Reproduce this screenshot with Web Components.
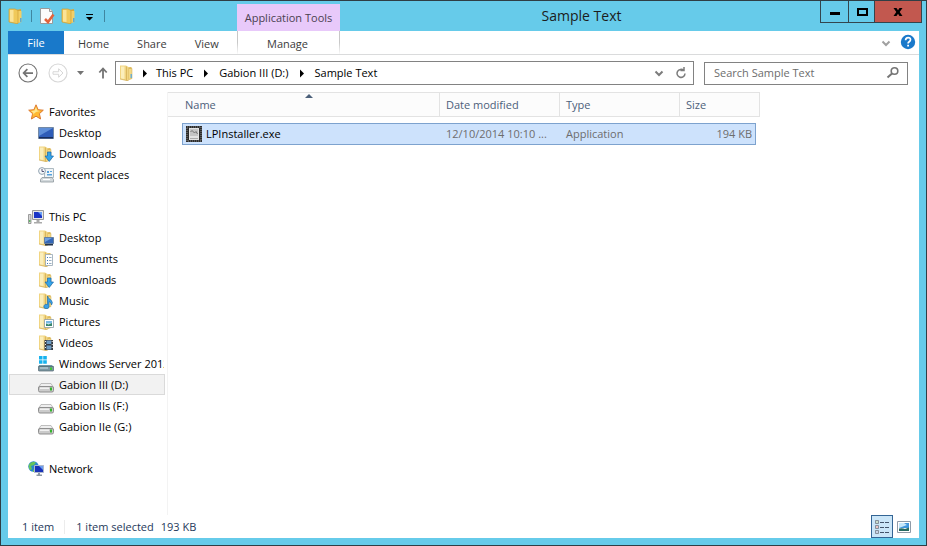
<!DOCTYPE html>
<html lang="en">
<head>
<meta charset="utf-8">
<title>Sample Text</title>
<style>
html, body { height: 100%; margin: 0; }
body { font: 11px/20px "Open Sans", "Noto Sans", sans-serif; color: #000; }
</style>
</head>
<body>
<explorer-window></explorer-window>
<script>
const FOLDER = `<path d="M7 2.500L12.500 2v12L8 15z" fill="#dfb956"/><path d="M9.500 3.500h3.500v10L9.500 14.500z" fill="#f3d987" stroke="#cfa94c" stroke-width=".5"/><path d="M1 .5h6l2.500 1.500v13.500h-2L1 14z" fill="#f1d582"/><path d="M2 1.500h3.500v12.500L2 13.500z" fill="#fbeebb"/><path d="M7.500 1.500v14M1 14l6.500 1.500h2" fill="none" stroke="#d0ab50" stroke-width=".7"/>`;
const DRIVE = `<path d="M3 6.500h10l2.500 4h-15z" fill="#efefef" stroke="#b0b0b0" stroke-width=".8"/><rect x=".5" y="9.500" width="15" height="5.500" rx="1.500" fill="#cbcbcb" stroke="#868686" stroke-width=".9"/><path d="M2 10.500h9v1.500H2z" fill="#f1f1f1"/><path d="M12 10.500h2v3h-2z" fill="#35b52e"/>`;
const ICONS = {
  folder: FOLDER + `<path d="M11.500 9h1.500v4h-1.500z" fill="#6caed0"/>`,
  gold: `<path d="M8 2l5-1v13l-5 1z" fill="#d9a93a"/><path d="M10 3h3.500v11L10 15z" fill="#f3cf66"/><path d="M1 1h6l3 1.500v13H8L1 14z" fill="#f0c95a" stroke="#cf9f33" stroke-width=".7"/><path d="M2 2h3.500v12L2 13.500z" fill="#fae397"/><path d="M12 10h1.500v4H12z" fill="#5fa9cf"/>`,
  page: `<path d="M1.500 .5h9l3 3v12h-12z" fill="#fbfbfb" stroke="#9a9a9a"/><path d="M10.500 .5v3h3" fill="#e8e8e8" stroke="#9a9a9a"/><path d="M6 11l3 3 5.500-7.500" fill="none" stroke="#e2633c" stroke-width="2.600"/>`,
  custom: `<path d="M5 6h7v1H5zM5 9h7l-3.500 3.500z" fill="#000"/>`,
  star: `<path d="M8 .8l2.100 4.900 5.200.5-3.900 3.500 1.200 5.300L8 12.200 3.400 15l1.200-5.300L.7 6.200l5.200-.5z" fill="#ffb931" stroke="#dd7a31"/><path d="M8 3l1.300 3.500 3 .5-4.300 1-3.500 3 1-2L3 7l3.500-.5z" fill="#ffe78f"/>`,
  desktop: `<path d="M.5 2.500h15v11H.5z" fill="#2f5db8" stroke="#7389a5"/><path d="M1 3h14L1 11z" fill="#5f8fd8"/><path d="M1 12h14v1.500H1z" fill="#182d5d"/>`,
  downloads: FOLDER + `<path d="M9.500 6h3.500v4h2.500L11.200 15.500 7 10h2.500z" fill="#35a4e8" stroke="#1869ad" stroke-width=".7"/>`,
  recent: `<path d="M6.500 1.500h9v9h-9z" fill="#eff4f7" stroke="#9aa9b3" stroke-width=".8"/><path d="M9 4h2v2H9zM12 4h2v1h-2zM9 7h5v1.500H9z" fill="#56a1dc"/><circle cx="4" cy="4" r="3.400" fill="#f5f8fa" stroke="#92a3b0"/><path d="M4 2v2.500h2" fill="none" stroke="#557"/><path d="M4 10.500h10l1.500 2v2.500h-13v-2.500z" fill="#d3d9dc" stroke="#8d979c" stroke-width=".8"/><path d="M5 12h7v1H5z" fill="#fff"/>`,
  pc: `<path d="M.5 5.500h2.500v9H.5z" fill="#d8d8d8" stroke="#888" stroke-width=".8"/><path d="M1.300 11h1v2h-1z" fill="#30a838"/><path d="M4.500 1.500h11v9h-11z" fill="#e7e7e7" stroke="#999"/><path d="M6 3h8v6H6z" fill="#1b35c5"/><path d="M10 3h4v4z" fill="#6aa0f5"/><path d="M8.500 11h3v2H14v1.500H6V13h2.500z" fill="#aaa"/>`,
  fdesktop: FOLDER + `<path d="M6.500 7.500h9v6h-9z" fill="#3467b8" stroke="#67809f"/><path d="M7 8h7l-7 4z" fill="#6fa1e2"/><path d="M7 14h8v1.500H7z" fill="#22344c"/>`,
  documents: FOLDER + `<path d="M7.500 3.500h7v11h-7z" fill="#fff" stroke="#96a6b2" stroke-width=".8"/><path d="M9 6h1v1H9zM9 9h1v1H9zM9 12h1v1H9z" fill="#3a7cc4"/><path d="M11 6h2.500v1H11zM11 9h2.500v1H11zM11 12h2.500v1H11z" fill="#9ab0c4"/>`,
  music: FOLDER + `<path d="M9.500 3q.5 2.500 3.500 4 2.500 2.500.5 5 0-2.500-2.500-3.500v5a2.600 2.200 0 1 1-1.500-2z" fill="#3ca0e8" stroke="#1769a8" stroke-width=".6"/>`,
  pictures: FOLDER + `<path d="M6.500 5.500h9v8h-9z" fill="#fff" stroke="#8c9ba5" stroke-width=".8"/><path d="M8 7h6v2.500H8z" fill="#78b9e5"/><path d="M8 12V9.500l2.500 1L14 9v3z" fill="#37866b"/>`,
  videos: FOLDER + `<path d="M6.500 5H15v10H6.500z" fill="#353b42"/><path d="M8.500 5.500h4.800V9H8.500zM8.500 10.500h4.800v4H8.500z" fill="#6c9cc4"/><path d="M7 6h1v1H7zm0 3h1v1H7zm0 3h1v1H7zm6.700-6h1v1h-1zm0 3h1v1h-1zm0 3h1v1h-1z" fill="#eee"/>`,
  server: `<path d="M1 0h3.500v3.500H1zM5.200 0h3.600v3.500H5.200zM1 4.200h3.500v3.500H1zM5.200 4.200h3.600v3.500H5.200z" fill="#17b2ee"/><path d="M1 9h13l1.500 2H.5z" fill="#6f97a8"/><path d="M.5 10.500h15v4q0 .5-.5.5H1q-.5 0-.5-.5z" fill="#7d98a4" stroke="#52656f" stroke-width=".7"/><path d="M2 11.500h8v1H2z" fill="#cfe0e7"/><path d="M12 11.500h2v2.500h-2z" fill="#41c934"/>`,
  drive: DRIVE,
  network: `<circle cx="5.500" cy="5.500" r="5.200" fill="#2786cf"/><path d="M1 3.500Q4-.5 8 1.500L6 4 3 5l1 3-1.500 1Q0 7 1 3.500zM5 8l2 3H5z" fill="#66c45a"/><path d="M6.500 4.500h9v7h-9z" fill="#1932b8" stroke="#aeb8cc"/><path d="M11 5h4v4z" fill="#6c9df0"/><path d="M10 12h2v1.500h2V15H8.500v-1.500H10z" fill="#8c98a4"/>`,
  exe: `<path d="M0 0h16v16H0z" fill="#2b2b2b"/><path d="M1 1h14v14H1z" fill="none" stroke="#8a8a8a" stroke-dasharray="1 1"/><path d="M3 2h10v12H3z" fill="#e2e2e2"/><path d="M4 3h8v7H4z" fill="#c4c4c4"/><path d="M4.500 6L6 4.500 8.500 7 10 5.500 11.500 8" fill="none" stroke="#666" stroke-width=".9"/><path d="M4 12.500h8" stroke="#aaa"/>`,
  min: `<path d="M3 8h10v3H3z"/>`,
  max: `<path d="M4 5h9v6H4z" fill="none" stroke="#000" stroke-width="2"/>`,
  close: `<path d="M3.500 4h3L8 6.300 9.500 4h3L9.700 8l2.800 4h-3L8 9.700 6.500 12h-3l2.800-4z"/>`,
  chevron: `<path d="M4.500 6.500L8 10l3.500-3.500" fill="none" stroke="currentColor" stroke-width="2"/>`,
  help: `<circle cx="8" cy="8" r="7.200" fill="#1979ca"/><path d="M5.600 6.200q0-2.500 2.500-2.500t2.400 2.100q0 1.100-1.300 1.900-1.100.7-1.100 1.700" fill="none" stroke="#fff" stroke-width="1.700"/><path d="M7.200 10.700h1.800v1.800H7.200z" fill="#fff"/>`,
  back: `<circle cx="8" cy="8" r="7.200" fill="none" stroke="currentColor" stroke-width=".9"/><path d="M7.500 4.900L4.500 8l3 3.100M4.700 8H12" fill="none" stroke="currentColor" stroke-width="1.400"/>`,
  forward: `<circle cx="8" cy="8" r="7.200" fill="none" stroke="currentColor" stroke-width=".9"/><path d="M4 7h4.500V4.600L12 8l-3.500 3.400V9H4z" fill="none" stroke="currentColor" stroke-width=".8"/>`,
  caret: `<path d="M5 6h7L8.500 10z" fill="currentColor"/>`,
  up: `<path d="M9 13.500V3.500M5.300 7.500L9 3.500l3.700 4" fill="none" stroke="currentColor" stroke-width="1.800"/>`,
  crumb: `<path d="M6 4.500l4 4-4 4z"/>`,
  refresh: `<path d="M10.800 5.500a4 4 0 1 0 1.200 3M7.500 5.500H11V2" fill="none" stroke="currentColor" stroke-width="1.500"/>`,
  search: `<circle cx="9.500" cy="6" r="3.300" fill="none" stroke="currentColor" stroke-width="1.600"/><path d="M7 8.500L2.500 12.500" stroke="currentColor" stroke-width="2"/>`,
  details: `<g fill="#fff" stroke="#6d7680" stroke-width=".8"><path d="M1.500 1.500h3v3h-3zM1.500 6.500h3v3h-3zM1.500 11.500h3v3h-3z"/></g><path d="M2.500 2.500h1v1h-1z" fill="#287b36"/><path d="M2.500 7.500h1v1h-1z" fill="#b41616"/><path d="M2.500 12.500h1v1h-1z" fill="#2252a0"/><path d="M6 3.500h4M11 3.500h4M6 8.500h4M11 8.500h4M6 13.500h4M11 13.500h4" stroke="#43546a"/>`,
  thumbs: `<path d="M1.500 2.500h13v11h-13z" fill="#fff" stroke="#8f9ba8"/><path d="M3 4h10v5H3z" fill="#4096dd"/><path d="M3 4h5l3 2-8 3z" fill="#c6e7fb"/><path d="M3 12V9.500q4-.5 6 .5l4-1.500V12z" fill="#256a61"/>`
};

function define(name, css, render) {
  customElements.define(name, class extends HTMLElement {
    connectedCallback() {
      if (this.shadowRoot) return;
      const root = this.attachShadow({ mode: 'open' });
      const t = document.createElement('template');
      t.innerHTML = `<style>*{box-sizing:border-box}button{font:inherit;color:inherit;background:none;border:0;padding:0;margin:0}${css}</style>${render(this)}`;
      root.append(t.content.cloneNode(true));
    }
  });
}

define('ui-icon', `:host{display:block;flex:none;width:16px;height:16px}svg{display:block;width:100%;height:100%}`,
  e => `<svg viewBox="0 0 16 16" aria-hidden="true">${ICONS[e.getAttribute('name')]}</svg>`);

define('title-bar', `
  :host{display:flex;height:30px}
  .quick{display:flex;align-items:center;width:236px;padding-left:7px;gap:4px}
  .quick i{width:1px;height:12px;background:#3f86a0;margin:0 3px}
  .quick button{display:block}
  .quick button+button{margin-left:2px}
  .quick button+button+button{margin-left:0}
  .context{width:103px;height:27px;margin-top:3px;background:#e8c9fa;color:#4a4150;text-align:center;line-height:28px}
  h1{flex:1;margin:0;padding-left:3px;text-align:center;font-size:14px;font-weight:400;line-height:29px;color:#1c1c1c}
  .controls{display:flex;height:22px;margin-right:4px;border:1px solid #33454d;border-top:0}
  .controls button{display:grid;place-items:center;width:28px;border-right:1px solid #33454d}
  .controls button:nth-child(2){width:26px}
  .controls .close{width:46px;background:#c2584f;border-right:0}`,
  () => `<div class="quick"><ui-icon name="gold"></ui-icon><i></i>
    <button aria-label="Properties"><ui-icon name="page"></ui-icon></button>
    <button aria-label="New folder"><ui-icon name="gold"></ui-icon></button>
    <button aria-label="Customize toolbar"><ui-icon name="custom"></ui-icon></button><i></i></div>
    <div class="context">Application Tools</div><h1><slot></slot></h1>
    <div class="controls"><button aria-label="Minimize"><ui-icon name="min"></ui-icon></button><button aria-label="Maximize"><ui-icon name="max"></ui-icon></button><button class="close" aria-label="Close"><ui-icon name="close"></ui-icon></button></div>`);

define('ribbon-tabs', `
  :host{display:flex;height:24px;border-bottom:1px solid #dadbdc;color:#3b3b3b}
  button{padding:2px 14px 0}
  .file{width:56px;background:#1979ca;color:#fff;padding-top:0}
  .main{display:flex;width:229px}
  .manage{width:103px;padding:2px 2px 0 0;border:solid;border-width:0 1px;border-image:linear-gradient(#c8c8c8,#c8c8c8 50%,#fff) 1}
  .end{display:flex;gap:6px;align-items:center;margin-left:auto;padding-right:3px}
  .end button{padding:0;color:#a0a0a0}
  .end button:last-child{padding-bottom:2px}`,
  () => `<div class="main"><button class="file">File</button><button>Home</button><button>Share</button><button>View</button></div>
    <button class="manage">Manage</button>
    <div class="end"><button aria-label="Expand ribbon"><ui-icon name="chevron"></ui-icon></button><button aria-label="Help"><ui-icon name="help"></ui-icon></button></div>`);

define('address-bar', `
  :host{display:flex;align-items:center;padding:6px 11px 7px 10px;color:#000}
  .nav{display:flex;align-items:center;color:#747474}
  .nav ui-icon{width:20px;height:20px}
  .nav button+button{margin-left:10px}
  .nav .history{margin-left:4px}.nav .history ui-icon,.nav .up ui-icon{width:16px;height:16px}
  .nav .history+.up{margin-left:6px}
  .nav .off{color:#d7d7d7}
  .path{flex:1;min-width:0;display:flex;align-items:center;height:24px;margin-left:5px;padding:0 4px 0 3px;border:1px solid #828282;white-space:nowrap}
  .path a{color:inherit;text-decoration:none}
  .path ui-icon[name=crumb]{margin:0 5px}
  .path ui-icon[name=folder]+ui-icon{margin:0 3px 0 2px}
  .tools{display:flex;gap:6px;margin-left:auto;color:#7c7c7c}
  .search{display:flex;align-items:center;width:204px;height:23px;margin-left:10px;padding:0 6px 0 9px;border:1px solid #828282;color:#757575}
  input{flex:1;min-width:0;border:0;padding:0;outline:0;font:inherit;color:inherit;background:none}
  input::placeholder{color:#6d6d6d;opacity:1}`,
  () => `<div class="nav"><button aria-label="Back"><ui-icon name="back"></ui-icon></button><button class="off" aria-label="Forward"><ui-icon name="forward"></ui-icon></button><button class="history" aria-label="Recent locations"><ui-icon name="caret"></ui-icon></button><button class="up" aria-label="Up"><ui-icon name="up"></ui-icon></button></div>
    <nav class="path" aria-label="Path"><ui-icon name="folder"></ui-icon><ui-icon name="crumb"></ui-icon><a href="#pc">This PC</a><ui-icon name="crumb"></ui-icon><a href="#d">Gabion III (D:)</a><ui-icon name="crumb"></ui-icon><a href="#sample">Sample Text</a>
    <span class="tools"><button aria-label="Previous locations"><ui-icon name="chevron"></ui-icon></button><button aria-label="Refresh"><ui-icon name="refresh"></ui-icon></button></span></nav>
    <div class="search"><input type="text" aria-label="Search Sample Text" placeholder="Search Sample Text"><button aria-label="Search"><ui-icon name="search"></ui-icon></button></div>`);

define('nav-item', `
  :host{display:block}
  a{display:flex;align-items:center;gap:5px;height:21px;padding-left:28px;border:1px solid transparent;color:inherit;text-decoration:none;white-space:nowrap;overflow:hidden}
  :host([root]) a{padding-left:18px}
  :host([selected]) a{background:#f2f2f2;border-color:#dadada}`,
  e => `<a href="#"><ui-icon name="${e.getAttribute('icon')}"></ui-icon><span><slot></slot></span></a>`);

define('nav-group', `:host{display:block;margin-bottom:21px}`, () => `<slot></slot>`);

define('nav-pane', `:host{display:block;width:160px;flex:none;padding:9px 2px 0 1px;border-right:1px solid #f3f3f3}`, () => {
  const groups = [
    ['Favorites', 'star', [['Desktop', 'desktop'], ['Downloads', 'downloads'], ['Recent places', 'recent']]],
    ['This PC', 'pc', [['Desktop', 'fdesktop'], ['Documents', 'documents'], ['Downloads', 'downloads'], ['Music', 'music'], ['Pictures', 'pictures'], ['Videos', 'videos'], ['Windows Server 2012', 'server'], ['Gabion III (D:)', 'drive', 'selected'], ['Gabion IIs (F:)', 'drive'], ['Gabion IIe (G:)', 'drive']]],
    ['Network', 'network', []]];
  return groups.map(([t, i, items]) => `<nav-group><nav-item root icon="${i}">${t}</nav-item>${items.map(([n, k, s = '']) => `<nav-item icon="${k}" ${s}>${n}</nav-item>`).join('')}</nav-group>`).join('');
});

define('file-list', `
  :host{display:block;flex:1;min-width:0}
  table{table-layout:fixed;width:592px;border-collapse:separate;border-spacing:0}
  th{position:relative;height:25px;padding:0 6px;border:solid #e3e3e3;border-width:1px 1px 1px 0;background:#fcfcfc;color:#4c607a;font-weight:400;text-align:left}
  th:first-child{padding-left:17px}
  th svg{position:absolute;top:0;left:52%;width:8px;height:5px;margin-left:-4px}
  tbody::before{content:"";display:block;height:6px}
  td{height:22px;padding:0 6px;color:#6d6d6d;white-space:nowrap;overflow:hidden}
  td.row{background:#cde2fc;border:solid #7da2ce;border-width:1px 0}
  td.name{border-left-width:1px;padding-left:3px;color:#000}
  td.size{border-right-width:1px;padding:0 3px;text-align:right}
  .file{display:flex;align-items:center;gap:4px}`,
  () => `<table><colgroup><col style="width:14px"><col><col style="width:120px"><col style="width:120px"><col style="width:76px"><col style="width:4px"></colgroup>
    <thead><tr><th colspan="2" aria-sort="ascending">Name<svg viewBox="0 0 8 5" aria-hidden="true"><path d="M0 5l4-4 4 4z" fill="#4c607a"/></svg></th><th>Date modified</th><th>Type</th><th colspan="2">Size</th></tr></thead>
    <tbody><tr><td></td><td class="row name"><span class="file"><ui-icon name="exe"></ui-icon>LPInstaller.exe</span></td><td class="row">12/10/2014 10:10 ...</td><td class="row">Application</td><td class="row size">194 KB</td><td></td></tr></tbody></table>`);

define('status-bar', `
  :host{display:flex;align-items:center;height:23px;padding:0 4px 0 14px;color:#1e395b}
  .count{padding-right:10px;border-right:1px solid #ececec;line-height:14px}
  .sel{margin-left:11px}.bytes{margin-left:7px}
  .views{display:flex;align-items:center;margin-left:auto}
  button{display:grid;place-items:center;width:22px;height:23px}
  .on{background:#cbe6f8;border:1px solid #336595}`,
  () => `<span class="count">1 item</span><span class="sel">1 item selected</span><span class="bytes">193 KB</span>
    <div class="views"><button class="on" aria-label="Details" aria-pressed="true"><ui-icon name="details"></ui-icon></button><button aria-label="Large icons"><ui-icon name="thumbs"></ui-icon></button></div>`);

define('explorer-window', `
  :host{display:flex;flex-direction:column;min-height:100vh;box-sizing:border-box;border:1px solid #2f3e45;background:#66cbea}
  main{flex:1;display:flex;flex-direction:column;margin:0 7px 7px;background:#fff}
  .body{flex:1;display:flex}`,
  () => `<title-bar>Sample Text</title-bar><main><ribbon-tabs></ribbon-tabs><address-bar></address-bar><div class="body"><nav-pane></nav-pane><file-list></file-list></div><status-bar></status-bar></main>`);
</script>
</body>
</html>
